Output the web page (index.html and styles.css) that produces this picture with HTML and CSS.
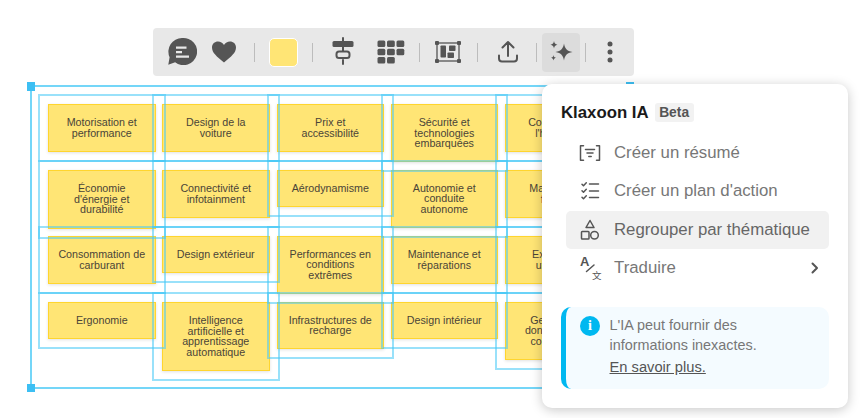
FILE: index.html
```html
<!DOCTYPE html>
<html lang="fr">
<head>
<meta charset="utf-8">
<title>Klaxoon IA</title>
<link rel="stylesheet" href="styles.css">
</head>
<body>
<main class="canvas">
  <div class="sticky" style="left:48px;top:104px;height:48px">Motorisation et<br>performance</div>
  <div class="sticky" style="left:162px;top:104px;height:48px">Design de la<br>voiture</div>
  <div class="sticky" style="left:276.5px;top:104px;height:48px">Prix et<br>accessibilité</div>
  <div class="sticky" style="left:390.5px;top:104px;height:58px">Sécurité et<br>technologies<br>embarquées</div>
  <div class="sticky" style="left:505px;top:104px;height:48px">Confort dans<br>l'habitacle</div>

  <div class="sticky" style="left:48px;top:169.5px;height:59px">Économie<br>d'énergie et<br>durabilité</div>
  <div class="sticky" style="left:162px;top:169.5px;height:48px">Connectivité et<br>infotainment</div>
  <div class="sticky" style="left:276.5px;top:169.5px;height:37.5px">Aérodynamisme</div>
  <div class="sticky" style="left:390.5px;top:169.5px;height:58.5px">Autonomie et<br>conduite<br>autonome</div>
  <div class="sticky" style="left:505px;top:169.5px;height:48px">Matériaux et<br>finitions</div>

  <div class="sticky" style="left:48px;top:235.5px;height:48px">Consommation de<br>carburant</div>
  <div class="sticky" style="left:162px;top:235.5px;height:37px">Design extérieur</div>
  <div class="sticky" style="left:276.5px;top:235.5px;height:58.5px">Performances en<br>conditions<br>extrêmes</div>
  <div class="sticky" style="left:390.5px;top:235.5px;height:48px">Maintenance et<br>réparations</div>
  <div class="sticky" style="left:505px;top:235.5px;height:48px">Expérience<br>utilisateur</div>

  <div class="sticky" style="left:48px;top:301.5px;height:37px">Ergonomie</div>
  <div class="sticky" style="left:162px;top:301.5px;height:69.5px">Intelligence<br>artificielle et<br>apprentissage<br>automatique</div>
  <div class="sticky" style="left:276.5px;top:301.5px;height:47.5px">Infrastructures de<br>recharge</div>
  <div class="sticky" style="left:390.5px;top:301.5px;height:37px">Design intérieur</div>
  <div class="sticky" style="left:505px;top:301.5px;height:58.5px">Gestion des<br>données et de<br>connectivité</div>

  <div class="selection">
    <span class="handle handle-tl"></span>
    <span class="handle handle-tr"></span>
    <span class="handle handle-bl"></span>
  </div>
</main>

<nav class="toolbar">
  <button class="tool tool-chat" aria-label="Commentaires">
    <svg width="30" height="30" viewBox="0 0 30 30"><path class="fill" d="M15 1a13.6 13.6 0 0 0-12.400 19.200L1.300 27.700l6.800-2.500A13.600 13.600 0 1 0 15 1z"/><path class="cut" d="M9 9.500h10.500v2.300H9zM9 14h6v2.300H9zM9 18.500h13v2.300H9z"/></svg>
  </button>
  <button class="tool tool-heart" aria-label="Favori">
    <svg width="26" height="24" viewBox="0 0 26 24"><path class="fill" d="M13 22.500C5.500 16.500 1 12.700 1 7.600 1 3.800 3.800 1.500 7 1.500c2.500 0 4.700 1.300 6 3.500 1.300-2.200 3.500-3.500 6-3.500 3.200 0 6 2.300 6 6.100 0 5.100-4.500 8.900-12 14.900z"/></svg>
  </button>
  <span class="sep"></span>
  <button class="tool tool-swatch" aria-label="Couleur"><span class="swatch"></span></button>
  <span class="sep sep-after-swatch"></span>
  <button class="tool" aria-label="Aligner">
    <svg width="24" height="30" viewBox="0 0 24 30"><path class="line" d="M12 1v3M12 10v4M12 23v4" /><rect class="fill" x="1.500" y="4" width="21" height="6" rx="1.500"/><rect class="line" x="5.500" y="14.500" width="13" height="6.500" rx="2.500"/></svg>
  </button>
  <button class="tool" aria-label="Grille">
    <svg width="28" height="24" viewBox="0 0 28 24"><g class="fill"><rect x="0.500" y="0.500" width="7.800" height="6.600" rx="1.500"/><rect x="10" y="0.500" width="7.800" height="6.600" rx="1.500"/><rect x="19.500" y="0.500" width="7.800" height="6.600" rx="1.500"/><rect x="0.500" y="8.700" width="7.800" height="6.600" rx="1.500"/><rect x="10" y="8.700" width="7.800" height="6.600" rx="1.500"/><rect x="19.500" y="8.700" width="7.800" height="6.600" rx="1.500"/><rect x="0.500" y="17" width="7.800" height="6.600" rx="1.500"/><rect x="10" y="17" width="7.800" height="6.600" rx="1.500"/></g></svg>
  </button>
  <span class="sep sep-half"></span>
  <button class="tool tool-frame" aria-label="Cadre">
    <svg width="26" height="22" viewBox="0 0 26 22"><rect class="thin" x="2" y="2" width="22" height="18"/><g class="fill"><rect x="0" y="0" width="4" height="4" rx="1"/><rect x="22" y="0" width="4" height="4" rx="1"/><rect x="0" y="18" width="4" height="4" rx="1"/><rect x="22" y="18" width="4" height="4" rx="1"/><rect x="5.500" y="4.500" width="5.500" height="12" rx=".8"/><rect x="14" y="4.500" width="6.500" height="5.500" rx=".8"/><rect x="12.500" y="11.500" width="6.500" height="5.500" rx=".8"/></g></svg>
  </button>
  <span class="sep"></span>
  <button class="tool tool-share" aria-label="Exporter">
    <svg width="22" height="24" viewBox="0 0 22 24"><path class="line" d="M11 16V2.500M5.500 7.500 11 2l5.500 5.500M2 15.500v3a3 3 0 0 0 3 3h12a3 3 0 0 0 3-3v-3"/></svg>
  </button>
  <span class="sep sep-half"></span>
  <button class="tool tool-active" aria-label="IA">
    <svg width="26" height="26" viewBox="0 0 26 26"><path class="fill" d="M16 4.500c.8 5 2.800 7.500 8.500 8.500-5.700 1-7.700 3.500-8.500 8.500-.8-5-2.800-7.500-8.500-8.500 5.700-1 7.700-3.500 8.500-8.500zM6 2c.4 2.300 1.200 3.200 3.500 3.700C7.200 6.200 6.400 7.100 6 9.400 5.600 7.100 4.800 6.200 2.500 5.700 4.800 5.200 5.600 4.300 6 2zM5.500 16c.3 1.800.9 2.500 2.700 2.800-1.800.4-2.400 1-2.700 2.800-.3-1.800-.9-2.400-2.700-2.800 1.800-.3 2.400-1 2.700-2.800z"/></svg>
  </button>
  <span class="sep sep-tight"></span>
  <button class="tool tool-dots" aria-label="Plus">
    <svg width="6" height="22" viewBox="0 0 6 22"><g class="fill"><circle cx="3" cy="3" r="2.500"/><circle cx="3" cy="11" r="2.500"/><circle cx="3" cy="19" r="2.500"/></g></svg>
  </button>
</nav>

<aside class="panel">
  <header class="panel-head">
    <h1 class="panel-title">Klaxoon IA</h1>
    <span class="badge">Beta</span>
  </header>
  <ul class="menu">
    <li class="menu-item">
      <svg class="menu-icon" width="24" height="24" viewBox="0 0 24 24"><path class="m-line" d="M5.500 4.800H2.500v14.400h3M18.500 4.800h3v14.400h-3M7.500 8.500h9M9 12h6M10.800 15.500h2.400"/></svg>
      <span>Créer un résumé</span>
    </li>
    <li class="menu-item">
      <svg class="menu-icon" width="24" height="24" viewBox="0 0 24 24"><path class="m-line" d="M4 5.200l1.500 1.600 2.800-3M4 11.700l1.500 1.600 2.800-3M4 18.200l1.500 1.600 2.800-3M11.500 5h9M11.500 12h9M11.500 18.500h9"/></svg>
      <span>Créer un plan d'action</span>
    </li>
    <li class="menu-item menu-item-active">
      <svg class="menu-icon" width="24" height="24" viewBox="0 0 24 24"><path class="m-line" d="M12 2.500l4 7H8z"/><rect class="m-line" x="3.500" y="13.500" width="7.500" height="7.500" rx=".8"/><circle class="m-line" cx="16.500" cy="17.200" r="3.800"/></svg>
      <span>Regrouper par thématique</span>
    </li>
    <li class="menu-item">
      <svg class="menu-icon" width="24" height="26" viewBox="0 0 24 26"><text class="t-a" x="2" y="10.500">A</text><path class="m-line" d="M8.500 16.500l7.500-6.500"/><text class="t-b" x="14" y="23.500">文</text></svg>
      <span>Traduire</span>
      <svg class="chevron" width="10" height="14" viewBox="0 0 10 14"><path class="m-line m-bold" d="M2.500 2.500 7 7l-4.500 4.500"/></svg>
    </li>
  </ul>
  <div class="notice">
    <span class="notice-icon">i</span>
    <p class="notice-text">L'IA peut fournir des<br>informations inexactes.<a class="notice-link" href="#">En savoir plus.</a></p>
  </div>
</aside>
</body>
</html>
```
FILE: styles.css
```css
* { box-sizing: border-box; }
html, body { margin: 0; padding: 0; }
body {
  width: 866px;
  height: 418px;
  position: relative;
  overflow: hidden;
  background: #fff;
  font-family: "Liberation Sans", Arial, sans-serif;
}
.canvas { position: absolute; inset: 0; }
.sticky {
  position: absolute;
  width: 107.5px;
  display: flex;
  align-items: center;
  justify-content: center;
  text-align: center;
  background: #ffe575;
  border: 1.500px solid #ffd52e;
  box-shadow: 0 1px 3px rgba(0, 0, 0, .12);
  color: #4a4438;
  font-size: 10.7px;
  line-height: 10.7px;
}
.sticky::after {
  content: "";
  position: absolute;
  inset: -11px;
  border: 2px solid rgba(70, 200, 245, .55);
  z-index: 1;
}
.selection {
  position: absolute;
  left: 29.500px;
  top: 85px;
  width: 601.500px;
  height: 304px;
  border: 2px solid rgba(70, 200, 245, .75);
  z-index: 2;
}
.handle { position: absolute; width: 8.500px; height: 8.500px; background: #3dbff3; }
.handle-tl { left: -5px; top: -5px; }
.handle-tr { right: -5px; top: -5px; }
.handle-bl { left: -5px; bottom: -5px; }

.toolbar {
  position: absolute;
  left: 153px;
  top: 28px;
  width: 481px;
  height: 48px;
  padding-left: 10px;
  display: flex;
  align-items: center;
  gap: 10px;
  background: #e8e8e8;
  border-radius: 4px;
  z-index: 3;
}
.tool {
  width: 38px;
  height: 39px;
  flex: none;
  padding: 0;
  border: 0;
  border-radius: 4px;
  background: transparent;
  display: flex;
  align-items: center;
  justify-content: center;
}
.tool-chat { margin-right: -6px; }
.tool-heart { margin-right: 1px; }
.tool-swatch { margin: 0 -.5px; }
.tool-frame { margin-left: -1px; }
.tool-share { margin-left: .5px; }
.tool-active { background: #dcdcdc; margin-left: -5px; }
.tool-dots { margin-left: -5px; }
.sep { width: 1px; height: 19px; flex: none; background: #bcbcbc; }
.sep-after-swatch { margin-right: .5px; }
.sep-half { margin-left: -.5px; }
.sep-tight { margin-left: -5px; }
.swatch {
  width: 29px;
  height: 29px;
  border: 1.500px solid #fff;
  border-radius: 5px;
  background: #ffe575;
}
.fill { fill: #555; }
.cut { fill: #e8e8e8; }
.line { fill: none; stroke: #555; stroke-width: 2; stroke-linecap: round; stroke-linejoin: round; }
.thin { fill: none; stroke: #555; stroke-width: 1.300; }
.tool svg { display: block; }

.panel {
  position: absolute;
  left: 542px;
  top: 84px;
  width: 306px;
  height: 324px;
  padding: 0 19px;
  background: #fff;
  border-radius: 10px;
  box-shadow: 0 2px 12px rgba(0, 0, 0, .22);
  z-index: 4;
}
.panel-head {
  height: 50px;
  padding-top: 7px;
  display: flex;
  align-items: center;
  gap: 6px;
}
.panel-title {
  margin: 0;
  font-size: 16.800px;
  font-weight: 700;
  color: #1a1a1a;
}
.badge {
  height: 19px;
  padding: 0 4.500px;
  display: flex;
  align-items: center;
  border-radius: 3px;
  background: #f2f2f2;
  color: #555;
  font-size: 13.800px;
  font-weight: 700;
}
.menu { margin: 0 0 0 5px; padding: 0; list-style: none; width: 263px; }
.menu-item {
  height: 38.300px;
  padding: 0 9.500px 0 12px;
  display: flex;
  align-items: center;
  gap: 12px;
  border-radius: 5px;
  color: #777;
  font-size: 16.800px;
  white-space: nowrap;
}
.menu-item-active { background: #f1f1f1; color: #666; }
.menu-icon { flex: none; }
.chevron { margin-left: auto; }
.m-line { fill: none; stroke: #555; stroke-width: 1.500; stroke-linecap: round; stroke-linejoin: round; }
.m-bold { stroke-width: 2; }
.t-a { font-size: 13px; font-weight: 700; fill: #555; }
.t-b { font-family: "Noto Sans CJK SC", sans-serif; font-size: 9.500px; fill: #555; }
.notice {
  margin-top: 20px;
  height: 82px;
  padding: 8px 10px 0 14px;
  display: flex;
  gap: 9.500px;
  background: #f4fbff;
  border-left: 5px solid #00b8f0;
  border-radius: 10px;
}
.notice-icon {
  width: 20px;
  height: 20px;
  margin-top: 1px;
  flex: none;
  display: flex;
  align-items: center;
  justify-content: center;
  border-radius: 50%;
  background: #00b8f0;
  color: #fff;
  font-family: "Liberation Serif", serif;
  font-size: 14px;
  font-weight: 700;
}
.notice-text {
  margin: 0;
  color: #777;
  font-size: 14.400px;
  line-height: 20px;
}
.notice-link { display: block; margin-top: 2px; color: #555; font-size: 14.700px; text-decoration: underline; }
```
